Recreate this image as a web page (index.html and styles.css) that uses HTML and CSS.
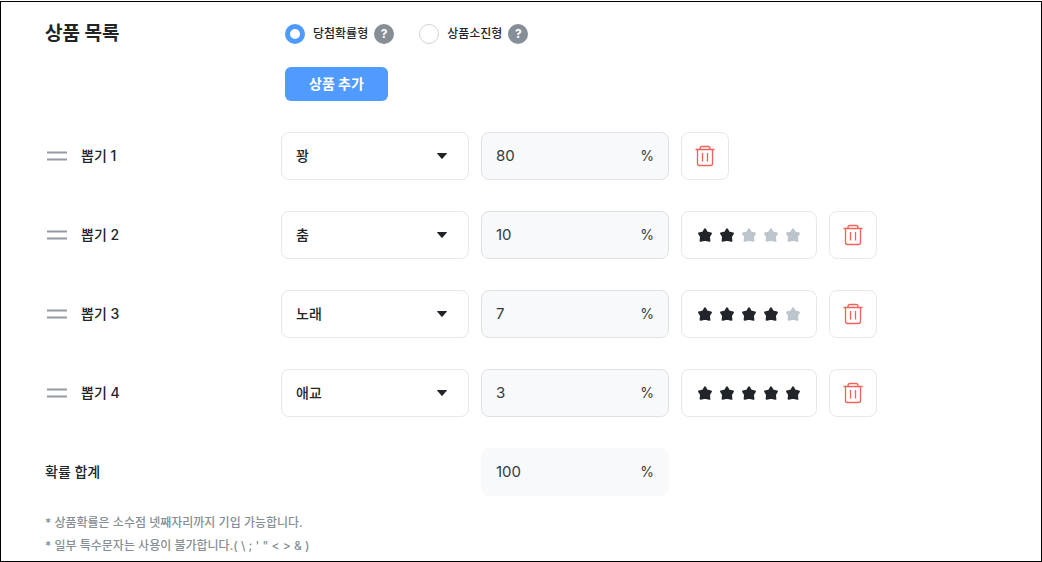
FILE: index.html
```html
<!DOCTYPE html>
<html lang="ko">
<head>
<meta charset="utf-8">
<meta name="viewport" content="width=device-width, initial-scale=1">
<title>상품 목록</title>
<link rel="stylesheet" href="styles.css">
</head>
<body>
<svg class="sprite" aria-hidden="true">
  <symbol id="grip" viewBox="0 0 22 12"><path d="M1 2.500H21M1 9.500H21" fill="none" stroke="currentColor" stroke-width="2"/></symbol>
  <symbol id="caret" viewBox="0 0 10 6"><path d="M0.5 0H9.5Q10.2 0 9.7 .7L5.6 5.6Q5 6.200 4.400 5.600L.3.700Q-.2 0 .5 0Z" fill="currentColor"/></symbol>
  <symbol id="star" viewBox="0 0 14 14"><path d="M7 1.300L8.800 4.400L12.900 5.400L10.900 8.600L11.400 12.800L7 11.800L2.600 12.800L3.100 8.600L1.100 5.400L5.200 4.400Z" fill="currentColor" stroke="currentColor" stroke-width="2" stroke-linejoin="round"/></symbol>
  <symbol id="trash" viewBox="0 0 20 22"><path d="M.5 4.500H19.500M5 4.500V3.500Q5 1.500 7 1.500H13Q15 1.500 15 3.500V4.500M2.500 4.500V18.500Q2.500 20.500 4.500 20.500H15.500Q17.500 20.500 17.500 18.500V4.500M7.500 8V16.500M12.500 8V16.500" fill="none" stroke="currentColor" stroke-width="1.300"/></symbol>
</svg>
<main class="panel">
  <form class="prizes">
    <section class="row row-head">
      <h1 class="title">상품 목록</h1>
      <div class="options">
        <div class="modes" role="radiogroup" aria-label="상품 목록">
          <div class="mode">
            <input class="radio" type="radio" name="mode" id="mode-rate" checked>
            <label class="mode-label" for="mode-rate">당첨확률형</label>
            <button class="help" type="button">?</button>
          </div>
          <div class="mode">
            <input class="radio" type="radio" name="mode" id="mode-stock">
            <label class="mode-label" for="mode-stock">상품소진형</label>
            <button class="help" type="button">?</button>
          </div>
        </div>
        <button class="add" type="button">상품 추가</button>
      </div>
    </section>

    <section class="row">
      <div class="name"><svg class="grip"><use href="#grip"/></svg><label for="prize-1">뽑기 1</label></div>
      <div class="fields">
        <div class="select-box"><select class="select" id="prize-1"><option>꽝</option></select><svg class="caret"><use href="#caret"/></svg></div>
        <label class="rate"><input class="rate-input" type="text" value="80"><span>%</span></label>
        <button class="delete" type="button" aria-label="삭제"><svg class="trash"><use href="#trash"/></svg></button>
      </div>
    </section>

    <section class="row">
      <div class="name"><svg class="grip"><use href="#grip"/></svg><label for="prize-2">뽑기 2</label></div>
      <div class="fields">
        <div class="select-box"><select class="select" id="prize-2"><option>춤</option></select><svg class="caret"><use href="#caret"/></svg></div>
        <label class="rate"><input class="rate-input" type="text" value="10"><span>%</span></label>
        <div class="stars">
          <button class="star on" type="button" aria-label="1"><svg><use href="#star"/></svg></button>
          <button class="star on" type="button" aria-label="2"><svg><use href="#star"/></svg></button>
          <button class="star" type="button" aria-label="3"><svg><use href="#star"/></svg></button>
          <button class="star" type="button" aria-label="4"><svg><use href="#star"/></svg></button>
          <button class="star" type="button" aria-label="5"><svg><use href="#star"/></svg></button>
        </div>
        <button class="delete" type="button" aria-label="삭제"><svg class="trash"><use href="#trash"/></svg></button>
      </div>
    </section>

    <section class="row">
      <div class="name"><svg class="grip"><use href="#grip"/></svg><label for="prize-3">뽑기 3</label></div>
      <div class="fields">
        <div class="select-box"><select class="select" id="prize-3"><option>노래</option></select><svg class="caret"><use href="#caret"/></svg></div>
        <label class="rate"><input class="rate-input" type="text" value="7"><span>%</span></label>
        <div class="stars">
          <button class="star on" type="button" aria-label="1"><svg><use href="#star"/></svg></button>
          <button class="star on" type="button" aria-label="2"><svg><use href="#star"/></svg></button>
          <button class="star on" type="button" aria-label="3"><svg><use href="#star"/></svg></button>
          <button class="star on" type="button" aria-label="4"><svg><use href="#star"/></svg></button>
          <button class="star" type="button" aria-label="5"><svg><use href="#star"/></svg></button>
        </div>
        <button class="delete" type="button" aria-label="삭제"><svg class="trash"><use href="#trash"/></svg></button>
      </div>
    </section>

    <section class="row">
      <div class="name"><svg class="grip"><use href="#grip"/></svg><label for="prize-4">뽑기 4</label></div>
      <div class="fields">
        <div class="select-box"><select class="select" id="prize-4"><option>애교</option></select><svg class="caret"><use href="#caret"/></svg></div>
        <label class="rate"><input class="rate-input" type="text" value="3"><span>%</span></label>
        <div class="stars">
          <button class="star on" type="button" aria-label="1"><svg><use href="#star"/></svg></button>
          <button class="star on" type="button" aria-label="2"><svg><use href="#star"/></svg></button>
          <button class="star on" type="button" aria-label="3"><svg><use href="#star"/></svg></button>
          <button class="star on" type="button" aria-label="4"><svg><use href="#star"/></svg></button>
          <button class="star on" type="button" aria-label="5"><svg><use href="#star"/></svg></button>
        </div>
        <button class="delete" type="button" aria-label="삭제"><svg class="trash"><use href="#trash"/></svg></button>
      </div>
    </section>

    <section class="row">
      <label class="name total-name" for="total">확률 합계</label>
      <div class="fields">
        <div class="field-space"></div>
        <div class="rate total"><input class="rate-input" id="total" type="text" value="100" readonly><span>%</span></div>
      </div>
    </section>
  </form>
  <div class="notes">
    <p>* 상품확률은 소수점 넷째자리까지 기입 가능합니다.</p>
    <p>* 일부 특수문자는 사용이 불가합니다.( \ ; ' " &lt; &gt; &amp; )</p>
  </div>
</main>
</body>
</html>
```

FILE: styles.css
```css
* {
  box-sizing: border-box;
}

body {
  margin: 0;
  padding-top: 1px;
  background: #fff;
  color: #212529;
  font-family: Inter, "Noto Sans CJK KR", sans-serif;
  font-size: 14px;
  font-weight: 500;
  line-height: 20px;
}

button,
input,
select {
  margin: 0;
  padding: 0;
  border: 0;
  background: none;
  color: inherit;
  font: inherit;
}

button {
  cursor: pointer;
}

svg {
  display: block;
}

.sprite {
  position: absolute;
  width: 0;
  height: 0;
}

.panel {
  min-height: calc(100vh - 1px);
  padding: 20px 44px 2px;
  border: 1px solid #000;
}

.prizes {
  display: flex;
  flex-direction: column;
  gap: 31px;
}

.row {
  display: grid;
  grid-template-columns: 236px 1fr;
  align-items: center;
}

.row-head {
  align-items: start;
}

.title {
  margin: 0;
  font-size: 19px;
  font-weight: 700;
  line-height: 24px;
}

.options {
  display: flex;
  flex-direction: column;
  align-items: flex-start;
  gap: 21px;
  padding-left: 4px;
}

.modes {
  display: flex;
  gap: 25px;
  height: 24px;
}

.mode {
  display: flex;
  align-items: center;
}

.radio {
  appearance: none;
  width: 20px;
  height: 20px;
  border: 1px solid #ced4da;
  border-radius: 50%;
  background: #fff;
}

.radio:checked {
  border: 5px solid #4f9aff;
}

.mode-label {
  padding: 0 6px 0 8px;
  font-size: 12px;
}

.help {
  width: 20px;
  height: 20px;
  border-radius: 50%;
  background: #868e96;
  color: #fff;
  font-size: 12px;
  font-weight: 700;
  line-height: 20px;
}

.add {
  height: 34px;
  padding: 0 24px;
  border-radius: 6px;
  background: #509bff;
  color: #fff;
  font-weight: 700;
}

.name {
  display: flex;
  align-items: center;
  gap: 13px;
  padding-left: 1px;
}

.total-name {
  padding-left: 0;
}

.grip {
  width: 22px;
  height: 12px;
  color: #939ba5;
}

.fields {
  display: flex;
  gap: 12px;
}

.select-box,
.rate,
.field-space {
  flex: 0 1 188px;
  min-width: 0;
}

.select-box {
  display: grid;
  align-items: center;
}

.select {
  grid-area: 1 / 1;
  appearance: none;
  width: 100%;
  height: 48px;
  padding: 0 14px;
  border: 1px solid #e6e8ea;
  border-radius: 8px;
  background: #fff;
}

.caret {
  grid-area: 1 / 1;
  justify-self: end;
  width: 10px;
  height: 6px;
  margin-right: 22px;
  pointer-events: none;
}

.rate {
  display: flex;
  align-items: center;
  height: 48px;
  padding: 0 14px;
  border: 1px solid #dee2e6;
  border-radius: 8px;
  background: #f8f9fb;
  color: #343a40;
  font-size: 14px;
  font-weight: 400;
}

.rate-input {
  flex: 1;
  min-width: 0;
  font-size: 15px;
}

.total {
  border-color: #f8f9fb;
}

.stars {
  display: flex;
  align-items: center;
  gap: 8px;
  height: 48px;
  padding: 0 16px;
  border: 1px solid #e6e8ea;
  border-radius: 8px;
}

.star {
  color: #bcc4cc;
}

.star.on {
  color: #212529;
}

.star svg {
  width: 14px;
  height: 14px;
}

.delete {
  display: grid;
  place-items: center;
  width: 48px;
  height: 48px;
  border: 1px solid #e6e8ea;
  border-radius: 8px;
  color: #f0625a;
}

.trash {
  width: 20px;
  height: 22px;
}

.notes {
  padding-top: 15px;
  color: #868e96;
  font-size: 12px;
  line-height: 23px;
}

.notes p {
  margin: 0;
}
```
